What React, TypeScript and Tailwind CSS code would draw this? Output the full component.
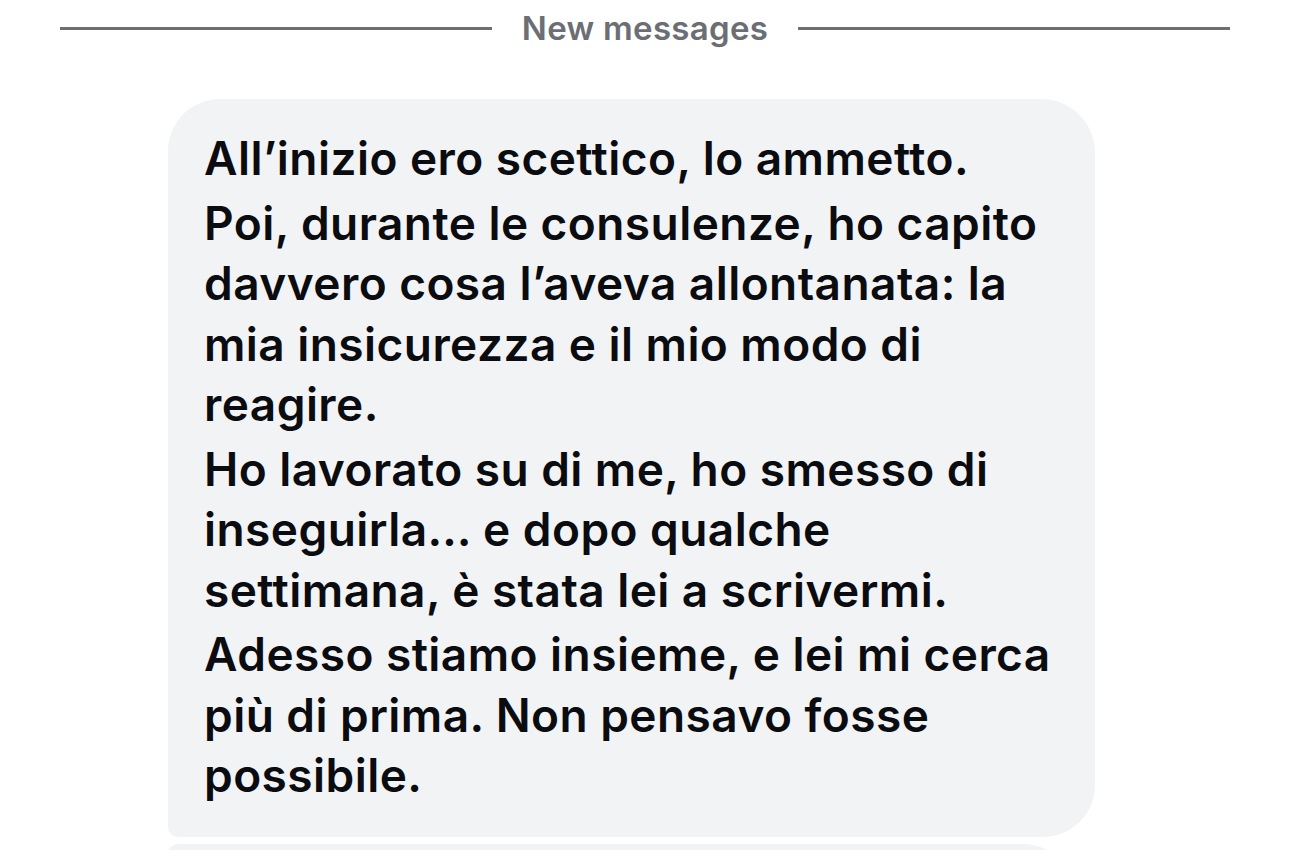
import React from "react";

const paragraphs: string[][] = [
  ["All\u2019inizio ero scettico, lo ammetto."],
  [
    "Poi, durante le consulenze, ho capito",
    "davvero cosa l\u2019aveva allontanata: la",
    "mia insicurezza e il mio modo di",
    "reagire.",
  ],
  [
    "Ho lavorato su di me, ho smesso di",
    "inseguirla\u2026 e dopo qualche",
    "settimana, \u00e8 stata lei a scrivermi.",
  ],
  [
    "Adesso stiamo insieme, e lei mi cerca",
    "pi\u00f9 di prima. Non pensavo fosse",
    "possibile.",
  ],
];

export default function App() {
  return (
    <div
      className="w-[1290px] h-[850px] overflow-hidden bg-white"
      style={{ fontFamily: "Inter, 'Noto Sans', sans-serif" }}
    >
      <div className="flex items-center px-[60px] pt-[16px] h-[40px]">
        <div className="flex-1 h-[3px] bg-[#6e6f74]" />
        <span className="px-[30px] text-[33px] leading-[40px] font-semibold text-[#6b6e75] tracking-[0.3px]">
          New messages
        </span>
        <div className="flex-1 h-[3px] bg-[#6e6f74]" />
      </div>
      <div className="pl-[168px] pt-[59px] flex flex-col gap-[7px]">
        <div className="w-[927px] bg-[#f2f3f5] rounded-tl-[52px] rounded-tr-[54px] rounded-br-[52px] rounded-bl-[10px] pl-[36px] pt-[29px] pb-[31px] flex flex-col gap-[4px]">
          {paragraphs.map((p, i) => (
            <div key={i} className="flex flex-col">
              {p.map((line, j) => (
                <div
                  key={j}
                  className="text-[46px] leading-[60.5px] font-semibold text-[#0b0c10] whitespace-nowrap tracking-[0.45px]"
                >
                  {line}
                </div>
              ))}
            </div>
          ))}
        </div>
        <div className="w-[907px] h-[60px] bg-[#f2f3f5] rounded-tl-[10px] rounded-tr-[52px]" />
      </div>
    </div>
  );
}
